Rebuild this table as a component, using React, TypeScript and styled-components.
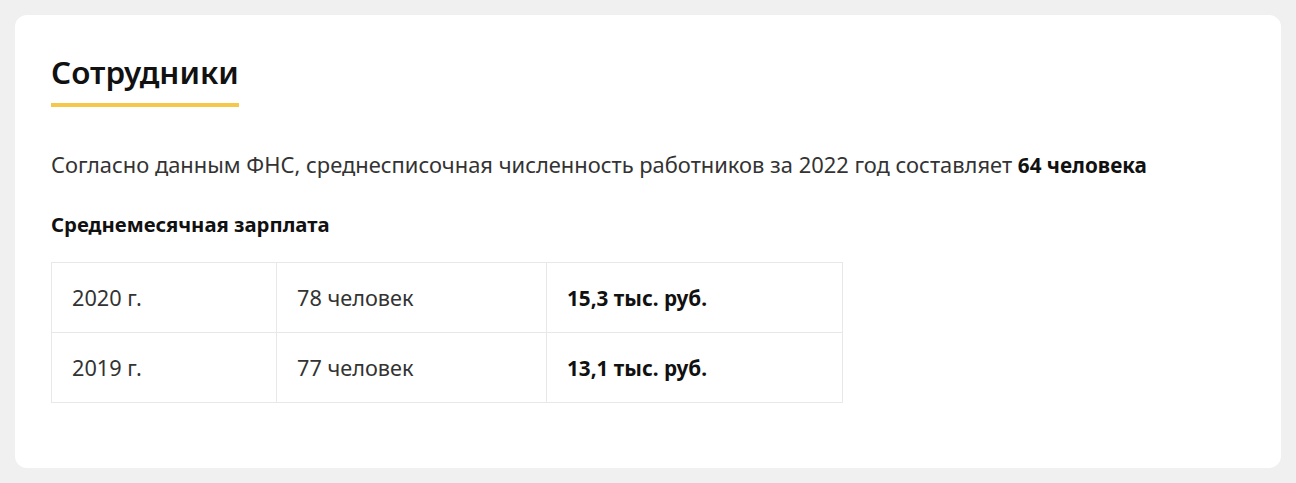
import styled, { createGlobalStyle } from 'styled-components';

const GlobalStyle = createGlobalStyle`
  body {
    margin: 0;
    background: #f0f0f0;
    font-family: "Noto Sans", "Open Sans", sans-serif;
    color: #222222;
  }
`;

const Page = styled.div`
  padding: 15px;
`;

const Card = styled.section`
  background: #ffffff;
  border-radius: 12px;
  padding: 37px 36px 65px 36px;
`;

const Title = styled.h2`
  display: inline-block;
  margin: 0;
  font-size: 31.4px;
  font-weight: 600;
  line-height: 40px;
  color: #111111;
  padding-bottom: 11px;
  border-bottom: 4px solid #f5c84c;
`;

const Lead = styled.p`
  margin: 43px 0 0 0;
  font-size: 21.9px;
  line-height: 30px;
  color: #333333;
  b {
    font-size: 20.7px;
    font-weight: 700;
    color: #111111;
  }
`;

const SubTitle = styled.h3`
  margin: 30px 0 0 0;
  font-size: 20.3px;
  font-weight: 700;
  line-height: 28px;
  color: #111111;
`;

const Table = styled.table`
  margin-top: 24px;
  border-collapse: collapse;
  font-size: 21.7px;
  color: #333333;
`;

const Cell = styled.td<{ $w: number; $bold?: boolean }>`
  width: ${(p) => p.$w}px;
  box-sizing: border-box;
  height: 70px;
  padding: 0 20px;
  border: 1px solid #e8e8e8;
  font-size: ${(p) => (p.$bold ? '20.7px' : '21.7px')};
  font-weight: ${(p) => (p.$bold ? 700 : 400)};
  color: ${(p) => (p.$bold ? '#111111' : '#333333')};
`;

const rows = [
  { year: '2020 г.', people: '78 человек', salary: '15,3 тыс. руб.' },
  { year: '2019 г.', people: '77 человек', salary: '13,1 тыс. руб.' },
];

function App() {
  return (
    <Page>
      <GlobalStyle />
      <Card>
        <Title>Сотрудники</Title>
        <Lead>
          Согласно данным ФНС, среднесписочная численность работников за 2022 год составляет <b>64 человека</b>
        </Lead>
        <SubTitle>Среднемесячная зарплата</SubTitle>
        <Table>
          <tbody>
            {rows.map((r) => (
              <tr key={r.year}>
                <Cell $w={225}>{r.year}</Cell>
                <Cell $w={270}>{r.people}</Cell>
                <Cell $w={296} $bold>{r.salary}</Cell>
              </tr>
            ))}
          </tbody>
        </Table>
      </Card>
    </Page>
  );
}

export default App;
